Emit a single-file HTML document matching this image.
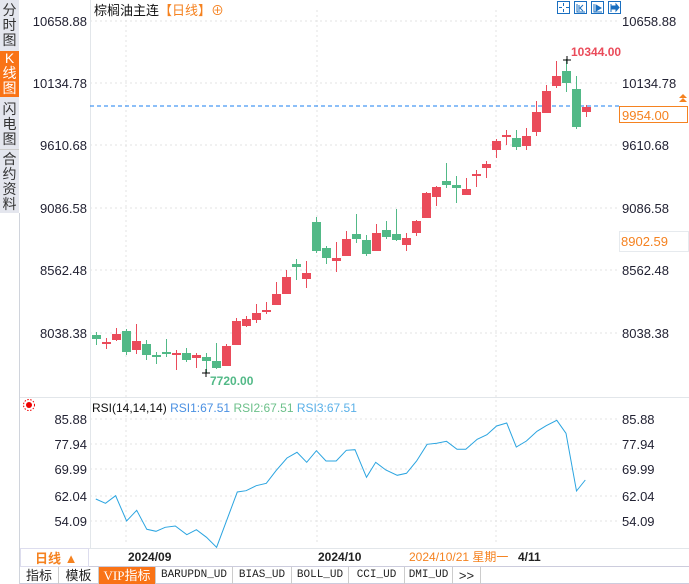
<!DOCTYPE html>
<html><head><meta charset="utf-8"><style>
body{margin:0;width:689px;height:584px;overflow:hidden;background:#fff;font-family:"Liberation Sans","Noto Sans CJK SC",sans-serif;position:relative}
.side{position:absolute;left:0;top:0;width:19px;height:213px;background:#e4e6ee}
.tab{position:absolute;left:0;width:19px;font-size:14px;line-height:15px;text-align:center;color:#333}
.tabs{position:absolute;left:20px;top:567px;height:17px;display:flex;font-size:13px}
.tabs div{border-right:1px solid #ccc;box-sizing:border-box;text-align:center;line-height:17px;color:#222}
.m{font-family:'Liberation Mono',monospace;font-size:11px}
</style></head><body>
<div class="side"></div>
<div class="tab" style="top:3px">分<br>时<br>图</div>
<div class="tab" style="top:51px;height:46px;background:#f97316;color:#fff">K<br>线<br>图</div>
<div class="tab" style="top:102px">闪<br>电<br>图</div>
<div style="position:absolute;left:0;top:149px;width:19px;height:1px;background:#ccc"></div>
<div class="tab" style="top:152px">合<br>约<br>资<br>料</div>
<div style="position:absolute;left:0;top:213px;width:19px;height:371px;border-right:1px solid #d0d4dc"></div>
<svg width="689" height="584" style="position:absolute;left:0;top:0" font-family="Liberation Sans, Noto Sans CJK SC, sans-serif">
<g stroke="#e3e3e3" stroke-dasharray="2,3">
<line x1="90" y1="21" x2="620" y2="21"/><line x1="90" y1="83" x2="620" y2="83"/><line x1="90" y1="145" x2="620" y2="145"/><line x1="90" y1="208" x2="620" y2="208"/><line x1="90" y1="270" x2="620" y2="270"/><line x1="90" y1="333" x2="620" y2="333"/>
<line x1="126" y1="10" x2="126" y2="545"/><line x1="317" y1="10" x2="317" y2="545"/><line x1="496" y1="10" x2="496" y2="545"/>
<line x1="90" y1="419" x2="620" y2="419"/><line x1="90" y1="444" x2="620" y2="444"/><line x1="90" y1="469" x2="620" y2="469"/><line x1="90" y1="496" x2="620" y2="496"/><line x1="90" y1="521" x2="620" y2="521"/>
</g>
<line x1="90.5" y1="0" x2="90.5" y2="548" stroke="#e2e6ea"/>
<line x1="20" y1="397.5" x2="689" y2="397.5" stroke="#e2e6ea"/>
<line x1="20" y1="548.5" x2="689" y2="548.5" stroke="#e2e6ea"/>
<line x1="20" y1="566.5" x2="689" y2="566.5" stroke="#ccd"/>
<line x1="20" y1="583.5" x2="689" y2="583.5" stroke="#ccd"/>
<g font-size="13" fill="#223" text-anchor="end">
<text x="87" y="26">10658.88</text><text x="87" y="88">10134.78</text><text x="87" y="150">9610.68</text><text x="87" y="213">9086.58</text><text x="87" y="275">8562.48</text><text x="87" y="338">8038.38</text>
<text x="87" y="424">85.88</text><text x="87" y="449">77.94</text><text x="87" y="474">69.99</text><text x="87" y="501">62.04</text><text x="87" y="526">54.09</text>
</g>
<g font-size="13" fill="#223">
<text x="622" y="26">10658.88</text><text x="622" y="88">10134.78</text><text x="622" y="150">9610.68</text><text x="622" y="213">9086.58</text><text x="622" y="275">8562.48</text><text x="622" y="338">8038.38</text>
<text x="622" y="424">85.88</text><text x="622" y="449">77.94</text><text x="622" y="474">69.99</text><text x="622" y="501">62.04</text><text x="622" y="526">54.09</text>
</g>
<rect x="619.5" y="231.5" width="69" height="20" fill="none" stroke="#e6eaee"/>
<text x="621" y="246" font-size="13" fill="#f58220">8902.59</text>
<line x1="90" y1="106" x2="620" y2="106" stroke="#1a7ff0" stroke-dasharray="4,3"/>
<rect x="619.5" y="106.5" width="68" height="16" fill="#fff" stroke="#f58220"/>
<text x="622" y="120" font-size="13" fill="#f58220">9954.00</text>
<path d="M679 102l4-4 4 4zM679 98l4-4 4 4z" fill="#f58220"/>
<text x="94" y="15" font-size="13" fill="#111">棕榈油主连<tspan fill="#f58220">【日线】⊕</tspan></text>
<g fill="none" stroke="#1a6fc0"><rect x="557.5" y="1.5" width="12" height="12"/><rect x="574.5" y="1.5" width="12" height="12"/><rect x="591.5" y="1.5" width="12" height="12"/><rect x="608.5" y="1.5" width="12" height="12"/></g>
<g stroke="#1a6fc0" fill="#1a6fc0"><path d="M563.5 3v3M563.5 9v3M559 7.5h3M566 7.5h3" fill="none"/><path d="M577 4v8h8M579 5v6M583 5l-3 3 3 3" fill="none"/><path d="M594 4v8h8" fill="none"/><path d="M596 5l5 3-5 3z"/><path d="M611 4v8" fill="none"/><path d="M612 6h4v-2l3 3.5-3 3.5v-2h-4z"/></g>
<g id="c"></g>
<text x="571" y="56" font-size="12" font-weight="bold" fill="#ea4b5a">10344.00</text>
<path d="M563 60h8M567 56v8" stroke="#000"/>
<path d="M202 373h8M206 369v8" stroke="#000"/>
<text x="210" y="385" font-size="12" font-weight="bold" fill="#52b987">7720.00</text>
<circle cx="29" cy="405" r="3" fill="#e00"/><circle cx="29" cy="405" r="5.5" fill="none" stroke="#e00" stroke-dasharray="1.5,1.5"/>
<text x="92" y="412" font-size="12"><tspan fill="#111">RSI(14,14,14)</tspan> <tspan fill="#4a90e2">RSI1:67.51</tspan> <tspan fill="#6cc08a"> RSI2:67.51</tspan> <tspan fill="#5ab0e8"> RSI3:67.51</tspan></text>
<polyline fill="none" stroke="#2aa4e0" stroke-width="1" points="95.8,499 105.5,503.3 115.6,495.7 126.6,521 136.7,510.3 146.8,529.3 156,531.3 165.2,527.3 175.3,526 186.8,534.7 196.4,529.7 206.5,537.3 216.6,547.3 237.3,492 246.1,490.7 256.2,485.7 266.3,483.3 276,470.7 287,458 297,452.3 306.7,462.3 316.4,450.7 326,461 336.2,461 346.3,450.3 355,449.7 366.5,477.3 375.7,462.3 385.8,470 397.2,475.3 406.5,473.3 416.6,461 427.1,444.3 436.8,443.3 446.5,441.3 457,449.3 465.8,449.3 477.2,439.3 486.9,434.7 496.6,426 506.7,423 516.3,447 526.4,441 537,431.3 546.2,425.7 556.8,420.3 566,433.3 576.5,491 585.3,480"/>
<rect x="20.5" y="548.5" width="68" height="18" fill="none" stroke="#dde"/>
<text x="35" y="563" font-size="13" fill="#f58220" font-weight="bold">日线 ▲</text>
<g font-size="12" font-weight="bold" fill="#222"><text x="128" y="561">2024/09</text><text x="318" y="561">2024/10</text><text x="518" y="561">4/11</text></g>
<text x="409" y="561" font-size="12" fill="#f58220">2024/10/21 星期一</text>
</svg>
<div class="tabs"><div style="width:39px">指标</div><div style="width:40px">模板</div><div style="width:57px;background:#f97316;color:#fff;font-family:'Liberation Serif','Noto Sans CJK SC',serif">VIP指标</div><div class="m" style="width:77px">BARUPDN_UD</div><div class="m" style="width:59px">BIAS_UD</div><div class="m" style="width:57px">BOLL_UD</div><div class="m" style="width:56px">CCI_UD</div><div class="m" style="width:48px">DMI_UD</div><div style="width:28px">&gt;&gt;</div></div>
<script>
var d=[[96,'g',335,339,332,345],[106,'r',342,343,338,349],[116,'r',334,340,328,341],[126,'g',331,352,329,355],[136,'r',341,350,324,354],[146,'g',344,355,340,360],[156,'g',355,357,352,364],[166,'g',352,354,339,357],[176,'r',353,354,350,370],[186,'g',353,360,348,362],[196,'r',355,358,353,368],[206,'g',357,361,353,373],[216,'g',361,368,343,369],[226,'r',346,366,344,366],[236,'r',321,345,318,345],[246,'r',319,326,316,327],[256,'r',313,320,304,323],[266,'r',310,312,302,314],[276,'r',294,305,282,305],[286,'r',277,294,270,294],[296,'g',264,267,259,280],[306,'r',273,279,261,288],[316,'g',222,251,217,253],[326,'g',248,258,246,264],[336,'r',258,261,242,272],[346,'r',239,256,231,256],[356,'g',234,239,214,243],[366,'g',240,254,235,256],[376,'r',233,251,224,251],[386,'g',230,237,221,239],[396,'g',234,240,209,241],[406,'r',238,245,233,251],[416,'r',221,233,220,236],[426,'r',193,218,192,218],[436,'r',187,197,186,206],[446,'g',181,185,163,188],[456,'g',185,188,176,203],[466,'r',189,195,178,195],[476,'r',174,175,170,187],[486,'r',164,168,161,178],[496,'r',141,150,139,158],[506,'r',135,136,130,145],[516,'g',138,147,130,150],[526,'r',136,146,128,150],[536,'r',112,132,101,136],[546,'r',91,113,85,113],[556,'r',76,86,61,88],[566,'g',71,83,59,92],[576,'g',89,127,76,129],[586,'r',107,112,105,117]];
var s='';d.forEach(function(c){var col=c[1]=='g'?'#52b987':'#ea4b5a';s+='<line x1="'+(c[0]+.5)+'" x2="'+(c[0]+.5)+'" y1="'+c[4]+'" y2="'+c[5]+'" stroke="'+col+'"/><rect x="'+(c[0]-4)+'" y="'+c[2]+'" width="9" height="'+Math.max(2,c[3]-c[2])+'" fill="'+col+'"/>';});
document.getElementById('c').innerHTML=s;
</script>
</body></html>
